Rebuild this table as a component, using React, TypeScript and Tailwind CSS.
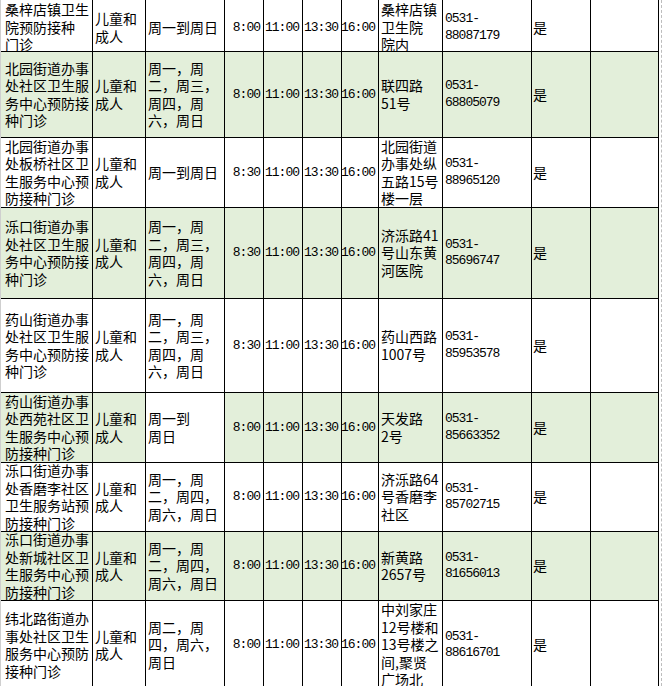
import React from "react";

type Row = {
  h: number;
  green: boolean;
  name: string[];
  days: string[];
  daysWhite?: boolean;
  t: string[];
  addr: string[];
  phone: string;
  top?: boolean;
};

const rows: Row[] = [
  {
    h: 52,
    green: false,
    top: true,
    name: ["桑梓店镇卫生", "院预防接种", "门诊"],
    days: ["周一到周日"],
    t: ["8:00", "11:00", "13:30", "16:00"],
    addr: ["桑梓店镇", "卫生院", "院内"],
    phone: "88087179",
  },
  {
    h: 86,
    green: true,
    name: ["北园街道办事", "处社区卫生服", "务中心预防接", "种门诊"],
    days: ["周一，周", "二，周三，", "周四，周", "六，周日"],
    t: ["8:00", "11:00", "13:30", "16:00"],
    addr: ["联四路", "51号"],
    phone: "68805079",
  },
  {
    h: 70,
    green: false,
    name: ["北园街道办事", "处板桥社区卫", "生服务中心预", "防接种门诊"],
    days: ["周一到周日"],
    t: ["8:30", "11:00", "13:30", "16:00"],
    addr: ["北园街道", "办事处纵", "五路15号", "楼一层"],
    phone: "88965120",
  },
  {
    h: 91,
    green: true,
    name: ["泺口街道办事", "处社区卫生服", "务中心预防接", "种门诊"],
    days: ["周一，周", "二，周三，", "周四，周", "六，周日"],
    t: ["8:30", "11:00", "13:30", "16:00"],
    addr: ["济泺路41", "号山东黄", "河医院"],
    phone: "85696747",
  },
  {
    h: 94,
    green: false,
    name: ["药山街道办事", "处社区卫生服", "务中心预防接", "种门诊"],
    days: ["周一，周", "二，周三，", "周四，周", "六，周日"],
    t: ["8:30", "11:00", "13:30", "16:00"],
    addr: ["药山西路", "1007号"],
    phone: "85953578",
  },
  {
    h: 70,
    green: true,
    daysWhite: true,
    name: ["药山街道办事", "处西苑社区卫", "生服务中心预", "防接种门诊"],
    days: ["周一到", "周日"],
    t: ["8:00", "11:00", "13:30", "16:00"],
    addr: ["天发路", "2号"],
    phone: "85663352",
  },
  {
    h: 69,
    green: false,
    name: ["泺口街道办事", "处香磨李社区", "卫生服务站预", "防接种门诊"],
    days: ["周一，周", "二，周四，", "周六，周日"],
    t: ["8:00", "11:00", "13:30", "16:00"],
    addr: ["济泺路64", "号香磨李", "社区"],
    phone: "85702715",
  },
  {
    h: 69,
    green: true,
    name: ["泺口街道办事", "处新城社区卫", "生服务中心预", "防接种门诊"],
    days: ["周一，周", "二，周四，", "周六，周日"],
    t: ["8:00", "11:00", "13:30", "16:00"],
    addr: ["新黄路", "2657号"],
    phone: "81656013",
  },
  {
    h: 89,
    green: false,
    name: ["纬北路街道办", "事处社区卫生", "服务中心预防", "接种门诊"],
    days: ["周二，周", "四，周六，", "周日"],
    t: ["8:00", "11:00", "13:30", "16:00"],
    addr: ["中刘家庄", "12号楼和", "13号楼之", "间,聚贤", "广场北"],
    phone: "88616701",
  },
];

const widths = [93, 53, 79, 39, 39, 39, 37, 64, 89, 59, 68];

function Lines({ lines }: { lines: string[] }) {
  return (
    <div className="whitespace-nowrap">
      {lines.map((l, i) => (
        <div key={i}>{l}</div>
      ))}
    </div>
  );
}

function Cell({
  w,
  h,
  green,
  children,
  align = "left",
  pl = 3,
  top,
  clip = true,
}: {
  w: number;
  h: number;
  green: boolean;
  children?: React.ReactNode;
  align?: "left" | "right";
  pl?: number;
  top?: boolean;
  clip?: boolean;
}) {
  const bg = green ? "bg-[#e3efda]" : "bg-white";
  return (
    <div
      className={`flex shrink-0 items-center border-r border-b border-black ${bg} ${
        align === "right" ? "justify-end pr-[3px]" : ""
      } ${clip ? "overflow-hidden" : "overflow-visible"} ${top ? "pt-1" : ""}`}
      style={{ width: w, height: h, paddingLeft: align === "left" ? pl : 0 }}
    >
      {children}
    </div>
  );
}

export default function App() {
  return (
    <div
      className="flex h-[686px] w-[663px] overflow-hidden bg-white text-black"
      style={{ fontFamily: '"Noto Sans CJK SC", "Noto Sans", sans-serif' }}
    >
      <div className="flex w-[659px] flex-col border-l border-[#cfcfcf] text-[14px] leading-[17.5px]">
        {rows.map((r, i) => (
          <div key={i} className="flex">
            <Cell w={widths[0] - 1} h={r.h} green={r.green} pl={4} top={r.top}>
              <Lines lines={r.name} />
            </Cell>
            <Cell w={widths[1]} h={r.h} green={r.green} pl={2} top={r.top}>
              <Lines lines={["儿童和", "成人"]} />
            </Cell>
            <Cell w={widths[2]} h={r.h} green={r.green && !r.daysWhite} pl={2} top={r.top}>
              <Lines lines={r.days} />
            </Cell>
            {r.t.map((t, j) => (
              <Cell
                key={j}
                w={widths[3 + j]}
                h={r.h}
                green={r.green}
                align="right"
                top={r.top}
                clip={false}
              >
                <span
                  className="whitespace-nowrap text-[13px] tracking-[-1px]"
                  style={{ fontFamily: '"Liberation Mono", "DejaVu Sans Mono", monospace' }}
                >
                  {t}
                </span>
              </Cell>
            ))}
            <Cell w={widths[7]} h={r.h} green={r.green} pl={2} top={r.top}>
              <Lines lines={r.addr} />
            </Cell>
            <Cell w={widths[8]} h={r.h} green={r.green} pl={2} top={r.top}>
              <div
                className="whitespace-nowrap text-[13px] leading-[16.5px] tracking-[-1px]"
                style={{ fontFamily: '"Liberation Mono", "DejaVu Sans Mono", monospace' }}
              >
                <div>0531-</div>
                <div>{r.phone}</div>
              </div>
            </Cell>
            <Cell w={widths[9]} h={r.h} green={r.green} pl={1} top={r.top}>
              <span>是</span>
            </Cell>
            <Cell w={widths[10]} h={r.h} green={r.green} top={r.top} />
          </div>
        ))}
      </div>
      <div className="w-[2px] shrink-0" />
      <div className="h-full w-[2px] shrink-0 border-l border-dashed border-[#bdbdbd]" />
    </div>
  );
}
